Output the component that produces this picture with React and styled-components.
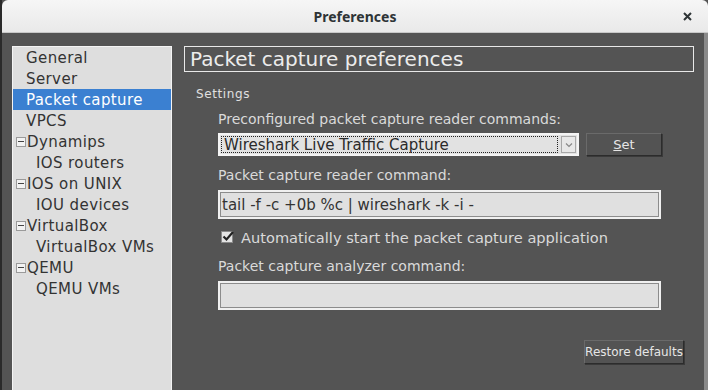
import styled, { createGlobalStyle } from 'styled-components';

const GlobalStyle = createGlobalStyle`
  html, body {
    margin: 0;
    padding: 0;
    background: #545454;
    overflow: hidden;
  }
  body {
    font-family: "DejaVu Sans", "Liberation Sans", sans-serif;
  }
`;

// ─── window frame ───
const Window = styled.div`
  width: 708px;
  height: 390px;
  display: flex;
  flex-direction: column;
  background: #545454;
  border-left: 2px solid #2a2a2a;
  box-sizing: border-box;
`;

const TitleBar = styled.div`
  height: 33px;
  flex: none;
  display: flex;
  align-items: center;
  justify-content: center;
  position: relative;
  background: linear-gradient(#f6f6f6, #e9e9e9);
  border-bottom: 1px solid #c8c8c8;
  border-radius: 6px 6px 0 0;
  box-sizing: border-box;
  font-family: "Noto Sans", "DejaVu Sans", sans-serif;
  font-weight: 700;
  font-size: 14px;
  color: #2e3436;
`;

const CloseButton = styled.span`
  position: absolute;
  right: 16px;
  top: 12px;
  display: flex;
`;

const Body = styled.div`
  flex: 1;
  display: flex;
  gap: 12px;
  padding: 13px 0 0 10px;
  border-right: 4px solid #8a8a8a;
  min-height: 0;
`;

// ─── sidebar tree ───
const Tree = styled.ul`
  width: 158px;
  flex: none;
  margin: 0;
  padding: 0;
  list-style: none;
  background: #dedede;
  border-left: 1px solid #f4f4f4;
  border-right: 1px solid #f4f4f4;
  border-top: 1px solid #f4f4f4;
`;

const TreeItem = styled.li`
  height: 21px;
  display: flex;
  align-items: center;
  padding-left: ${p => (p.$child ? 23 : p.$branch ? 3 : 13)}px;
  font-size: 15px;
  letter-spacing: 0.4px;
  color: ${p => (p.$selected ? '#ffffff' : '#333333')};
  background: ${p => (p.$selected ? '#3b80d1' : 'transparent')};
  white-space: nowrap;
`;

const Expander = styled.span`
  width: 8px;
  height: 8px;
  margin-right: 1px;
  border: 1px solid #9a9a9a;
  background: #f2f2f2;
  display: flex;
  align-items: center;
  justify-content: center;
  &::after {
    content: '';
    width: 6px;
    height: 1px;
    background: #444;
  }
`;

// ─── main page ───
const Page = styled.div`
  width: 510px;
  flex: none;
  display: flex;
  flex-direction: column;
  color: #e2e2e2;
`;

const PageTitle = styled.div`
  height: 26px;
  box-sizing: border-box;
  border: 1px solid #e8e8e8;
  padding-left: 5px;
  display: flex;
  align-items: center;
  font-size: 20px;
  color: #ececec;
`;

const GroupLabel = styled.div`
  margin: 15px 0 0 12px;
  font-size: 12px;
  letter-spacing: 0.6px;
  color: #e0e0e0;
`;

const Group = styled.div`
  padding-left: 34px;
  display: flex;
  flex-direction: column;
`;

const FieldLabel = styled.div`
  font-size: 14px;
  color: #dadada;
  height: 20px;
  margin-top: ${p => p.$top || 0}px;
  display: flex;
  align-items: center;
`;

const Row = styled.div`
  display: flex;
  align-items: center;
  gap: 7px;
  margin-top: 4px;
`;

const Combo = styled.div`
  width: 361px;
  height: 23px;
  box-sizing: border-box;
  border: 2px solid #f4f4f4;
  background: #e2e2e2;
  display: flex;
  align-items: stretch;
  padding: 1px;
`;

const ComboText = styled.div`
  flex: 1;
  border: 1px dotted #222;
  display: flex;
  align-items: center;
  padding-left: 2px;
  font-size: 15px;
  color: #2a2a2a;
`;

const ComboArrow = styled.div`
  width: 13px;
  margin-left: 3px;
  border: 1px solid #a8a8a8;
  background: #e8e8e8;
  display: flex;
  align-items: center;
  justify-content: center;
`;

const Button = styled.button`
  height: ${p => p.$h || 23}px;
  width: ${p => p.$w}px;
  padding: 0;
  box-sizing: border-box;
  background: #535353;
  border: 1px solid #6a6a6a;
  border-right-color: #2c2c2c;
  border-bottom-color: #2c2c2c;
  box-shadow: 1px 1px 0 #3a3a3a;
  font-family: "DejaVu Sans", sans-serif;
  font-size: ${p => p.$fs || 12}px;
  color: #e6e6e6;
  display: flex;
  align-items: center;
  justify-content: center;
`;

const TextInput = styled.div`
  width: 443px;
  height: 29px;
  box-sizing: border-box;
  margin-top: 5px;
  border: 2px solid #f0f0f0;
  outline: 1px solid #8c8c8c;
  outline-offset: -3px;
  background: #e0e0e0;
  display: flex;
  align-items: center;
  padding-left: 2px;
  font-size: 15px;
  color: #333;
`;

const CheckRow = styled.div`
  display: flex;
  align-items: center;
  gap: 8px;
  margin: 8px 0 0 3px;
  height: 20px;
  font-size: 14.6px;
  color: #dadada;
`;

const CheckBox = styled.span`
  width: 12px;
  height: 12px;
  box-sizing: border-box;
  background: #e4e4e4;
  border: 1px solid #8a8a8a;
  position: relative;
  svg {
    position: absolute;
    left: -1px;
    top: -3px;
  }
`;

const Footer = styled.div`
  display: flex;
  justify-content: flex-end;
  margin-top: 30px;
  padding-right: 10px;
`;

const items = [
  { label: 'General' },
  { label: 'Server' },
  { label: 'Packet capture', selected: true },
  { label: 'VPCS' },
  { label: 'Dynamips', branch: true },
  { label: 'IOS routers', child: true },
  { label: 'IOS on UNIX', branch: true },
  { label: 'IOU devices', child: true },
  { label: 'VirtualBox', branch: true },
  { label: 'VirtualBox VMs', child: true },
  { label: 'QEMU', branch: true },
  { label: 'QEMU VMs', child: true },
];

export default function App() {
  return (
    <>
      <GlobalStyle />
      <Window>
        <TitleBar>
          Preferences
          <CloseButton>
            <svg width="9" height="9" viewBox="0 0 9 9">
              <path d="M1 1 L8 8 M8 1 L1 8" stroke="#2e3436" strokeWidth="2" />
            </svg>
          </CloseButton>
        </TitleBar>
        <Body>
          <Tree>
            {items.map(it => (
              <TreeItem
                key={it.label}
                $selected={it.selected}
                $branch={it.branch}
                $child={it.child}
              >
                {it.branch && <Expander />}
                {it.label}
              </TreeItem>
            ))}
          </Tree>
          <Page>
            <PageTitle>Packet capture preferences</PageTitle>
            <GroupLabel>Settings</GroupLabel>
            <Group>
              <FieldLabel $top={8}>Preconfigured packet capture reader commands:</FieldLabel>
              <Row>
                <Combo>
                  <ComboText>Wireshark Live Traffic Capture</ComboText>
                  <ComboArrow>
                    <svg width="8" height="6" viewBox="0 0 8 6">
                      <path d="M1 1.5 L4 4.5 L7 1.5" stroke="#888" strokeWidth="1.2" fill="none" />
                    </svg>
                  </ComboArrow>
                </Combo>
                <Button $w={76} $h={23} $fs={13}>
                  <span><u>S</u>et</span>
                </Button>
              </Row>
              <FieldLabel $top={9}>Packet capture reader command:</FieldLabel>
              <TextInput>tail -f -c +0b %c | wireshark -k -i -</TextInput>
              <CheckRow>
                <CheckBox>
                  <svg width="14" height="14" viewBox="0 0 14 14">
                    <path d="M2.5 7.5 L5.5 10.5 L12 3" stroke="#222" strokeWidth="2.2" fill="none" />
                  </svg>
                </CheckBox>
                Automatically start the packet capture application
              </CheckRow>
              <FieldLabel $top={9}>Packet capture analyzer command:</FieldLabel>
              <TextInput />
            </Group>
            <Footer>
              <Button $w={100} $h={24}>Restore defaults</Button>
            </Footer>
          </Page>
        </Body>
      </Window>
    </>
  );
}
